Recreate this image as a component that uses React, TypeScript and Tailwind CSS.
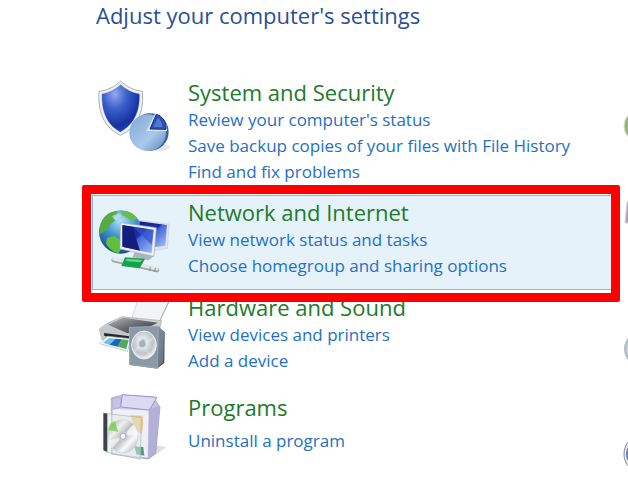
import type { ReactNode } from "react";
import clsx from "clsx";

type Category = {
  title: string;
  links: string[];
  icon: ReactNode;
  className?: string;
  linksClassName?: string;
  selected?: boolean;
};

const iconClass = "h-20 w-[72px] shrink-0";

function SecurityIcon() {
  return (
    <svg className={iconClass} viewBox="24 27 216 240" aria-hidden="true">
      <defs>
        <radialGradient id="shield" cx="0.35" cy="0.2" r="0.9">
          <stop offset="0" stopColor="#8fabef" />
          <stop offset="0.35" stopColor="#3c5fca" />
          <stop offset="0.75" stopColor="#1530a0" />
          <stop offset="1" stopColor="#2c55cf" />
        </radialGradient>
        <linearGradient id="pie" x1="0" y1="0" x2="1" y2="1">
          <stop offset="0" stopColor="#7fa6d6" />
          <stop offset="0.6" stopColor="#a9c9ec" />
          <stop offset="1" stopColor="#5b84bd" />
        </linearGradient>
      </defs>
      <ellipse cx="196" cy="232" rx="44" ry="12" fill="#e3e6ea" />
      <path d="M92 33C75 50 53 61 27 64C24 115 34 168 91 196C148 170 162 118 157 64C130 61 109 49 92 33Z" fill="#eef1f4" stroke="#a7afb8" strokeWidth="3" />
      <path d="M92 44C76 58 57 68 36 72C35 116 45 161 91 186C137 161 150 116 148 72C127 68 107 58 92 44Z" fill="url(#shield)" stroke="#54709f" strokeWidth="1" />
      <circle cx="180" cy="186" r="56" fill="#3a5fa6" />
      <circle cx="173" cy="188" r="55" fill="url(#pie)" />
      <path d="M169 183L195 131C222 137 233 158 231 183Z" fill="#d7e6f7" />
      <path d="M180 177L199 133C220 140 230 158 228 178Z" fill="#2a51b8" stroke="#17327c" strokeWidth="3" />
      <path d="M190 171L203 143C212 149 216 159 217 171Z" fill="#4f7ad2" />
    </svg>
  );
}

function NetworkIcon() {
  return (
    <svg className={iconClass} viewBox="54 57 216 240" aria-hidden="true">
      <defs>
        <radialGradient id="globe" cx="0.5" cy="0.25" r="0.8">
          <stop offset="0" stopColor="#b4e4fa" />
          <stop offset="0.45" stopColor="#3f92d2" />
          <stop offset="1" stopColor="#12427f" />
        </radialGradient>
        <linearGradient id="screen" x1="0" y1="0" x2="1" y2="1">
          <stop offset="0" stopColor="#10208a" />
          <stop offset="0.45" stopColor="#1b2da6" />
          <stop offset="0.5" stopColor="#4666d8" />
          <stop offset="1" stopColor="#a8c4f4" />
        </linearGradient>
      </defs>
      <circle cx="122" cy="156" r="65" fill="url(#globe)" />
      <path d="M61 136C68 110 84 97 108 93L114 103L101 111L105 122L91 132L80 151L66 158L58 166Z" fill="#57ac40" />
      <path d="M122 92C145 91 162 100 173 116L154 122L139 111L127 106Z" fill="#67bd4b" />
      <path d="M81 174L103 168L121 180L126 205L115 220C99 217 85 205 78 190Z" fill="#60c03c" />
      <path d="M94 109L115 99L124 108L108 122Z" fill="#c2edf4" opacity="0.6" />
      <path d="M177 121L268 132L262 205L229 211L180 197Z" fill="#dfe5ee" stroke="#a9b4c2" strokeWidth="1" />
      <path d="M178 124L261 135L256 197L228 201L179 190Z" fill="url(#screen)" />
      <path d="M164 216L222 228L205 241L158 232Z" fill="#aab5bd" />
      <path d="M121 128L229 143L222 229L120 207Z" fill="#edf0f5" stroke="#a2adbb" strokeWidth="2" />
      <path d="M127 135L221 149L215 220L127 200Z" fill="url(#screen)" />
      <path d="M128 136L157 141L180 212L128 200Z" fill="#121e7c" />
      <path d="M160 142L220 151L215 194Z" fill="#3552cc" opacity="0.7" />
      <path d="M101 240L231 270" stroke="#9ba6a5" strokeWidth="14" strokeLinecap="round" />
      <path d="M101 237L231 267" stroke="#e3ebe8" strokeWidth="9" strokeLinecap="round" />
      <path d="M135 232L195 236L179 265L124 258Z" fill="#14a04c" />
      <path d="M141 236L187 240L180 247L137 243Z" fill="#6cd585" />
      <path d="M211 260L209 272M226 264L224 276" stroke="#7d8a88" strokeWidth="3" />
    </svg>
  );
}

function HardwareIcon() {
  return (
    <svg className={iconClass} viewBox="24 12 216 240" aria-hidden="true">
      <defs>
        <linearGradient id="printer" x1="0" y1="0" x2="1" y2="1">
          <stop offset="0" stopColor="#b5b8bb" />
          <stop offset="0.5" stopColor="#666a6e" />
          <stop offset="1" stopColor="#34383c" />
        </linearGradient>
        <linearGradient id="speaker" x1="0" y1="0" x2="1" y2="1">
          <stop offset="0" stopColor="#929eaa" />
          <stop offset="1" stopColor="#667581" />
        </linearGradient>
        <radialGradient id="cone" cx="0.45" cy="0.4" r="0.6">
          <stop offset="0" stopColor="#8d979f" />
          <stop offset="0.25" stopColor="#e3e8eb" />
          <stop offset="0.7" stopColor="#bcc5cb" />
          <stop offset="1" stopColor="#f3f5f6" />
        </radialGradient>
      </defs>
      <path d="M145 24L238 34L204 104L126 83Z" fill="#f3f4f5" stroke="#c9cdd1" strokeWidth="2" />
      <path d="M236 36L204 104" stroke="#a3a8ad" strokeWidth="3" />
      <path d="M28 117L50 101L96 80L215 92L207 124L120 160L36 149Z" fill="#c9cdcf" stroke="#a5abb0" strokeWidth="2" />
      <path d="M54 104L99 83L203 98L171 115L112 130Z" fill="url(#printer)" />
      <path d="M30 119L54 108L111 133L119 153L104 158L34 146Z" fill="#c3c7c8" />
      <path d="M42 129L119 139L118 149L43 138Z" fill="#25292d" />
      <path d="M53 139L121 146L113 184L28 161Z" fill="#fbfcfd" stroke="#a9b5bd" strokeWidth="2" />
      <path d="M58 144L77 146L58 164L39 158Z" fill="#75bde5" />
      <path d="M77 146L96 148L83 170L58 164Z" fill="#1769b5" />
      <path d="M96 148L116 150L109 177L83 170Z" fill="#55a95a" />
      <path d="M205 115L224 125L223 219L202 235Z" fill="#43505a" />
      <path d="M117 112L205 108L222 125L219 215L202 236L118 225Z" fill="url(#speaker)" />
      <path d="M118 112L205 109L202 234L119 224Z" fill="#8999a5" stroke="#a7b3bb" strokeWidth="2" />
      <ellipse cx="162" cy="165" rx="37" ry="42" fill="url(#cone)" stroke="#e9edef" strokeWidth="3" />
      <path d="M158 161L139 132M159 162L190 145M159 164L180 196M157 163L134 184" stroke="#f9fbfc" strokeWidth="4" opacity="0.4" />
      <circle cx="157" cy="162" r="10" fill="#a8b2b9" />
    </svg>
  );
}

function ProgramsIcon() {
  return (
    <svg className={iconClass} viewBox="24 27 216 240" aria-hidden="true">
      <defs>
        <linearGradient id="box" x1="0" y1="0" x2="1" y2="1">
          <stop offset="0" stopColor="#e6e5f8" />
          <stop offset="1" stopColor="#a6a3cd" />
        </linearGradient>
        <linearGradient id="disc" x1="0" y1="0" x2="1" y2="1">
          <stop offset="0" stopColor="#9ba1a6" />
          <stop offset="0.3" stopColor="#f0f1ef" />
          <stop offset="0.5" stopColor="#b4babe" />
          <stop offset="0.7" stopColor="#fafafa" />
          <stop offset="1" stopColor="#9aa2a7" />
        </linearGradient>
      </defs>
      <path d="M177 222L229 187L201 181Z" fill="#dedee3" />
      <path d="M64 39L96 30L190 36L210 67L197 205L175 222L65 207Z" fill="url(#box)" stroke="#9390bb" strokeWidth="2" />
      <path d="M177 73L210 62L195 205L174 221Z" fill="#b3b0d8" />
      <path d="M67 70L177 75L174 219L67 207Z" fill="#f0eff8" stroke="#bbb8d8" strokeWidth="2" />
      <path d="M92 66L97 29L201 37L178 75Z" fill="#dcdaf3" stroke="#9996c3" strokeWidth="3" />
      <path d="M66 40L93 36L91 67L69 73Z" fill="#c6c3e7" stroke="#a19fc7" strokeWidth="2" />
      <path d="M122 91L157 92L160 117L155 148L135 135Z" fill="#edc482" />
      <path d="M134 184L160 186L163 212L139 208Z" fill="#579c7f" />
      <path d="M45 85L154 98L151 223L44 200Z" fill="#dfe9e5" fillOpacity="0.5" stroke="#a5b8b1" strokeWidth="2" />
      <path d="M40 84L52 86L52 200L40 196Z" fill="#3c4249" />
      <ellipse cx="99" cy="154" rx="45" ry="50" fill="url(#disc)" stroke="#aab4b6" strokeWidth="1" />
      <path d="M85 141L54 135C57 119 65 111 75 109Z" fill="#7bcb4c" opacity="0.75" />
      <path d="M99 154L130 118C138 126 143 137 144 149Z" fill="#f9f9fa" opacity="0.8" />
      <path d="M99 154L67 190C60 183 56 176 55 167Z" fill="#f9f9fa" opacity="0.7" />
      <ellipse cx="99" cy="154" rx="14" ry="16" fill="#c5cbd1" />
      <ellipse cx="99" cy="154" rx="8" ry="9" fill="#fff" stroke="#8f979d" strokeWidth="2" />
    </svg>
  );
}

const categories: Category[] = [
  {
    title: "System and Security",
    links: [
      "Review your computer's status",
      "Save backup copies of your files with File History",
      "Find and fix problems",
    ],
    icon: <SecurityIcon />,
    className: "mb-1.5",
  },
  {
    title: "Network and Internet",
    links: ["View network status and tasks", "Choose homegroup and sharing options"],
    icon: <NetworkIcon />,
    selected: true,
  },
  {
    title: "Hardware and Sound",
    links: ["View devices and printers", "Add a device"],
    icon: <HardwareIcon />,
    className: "mb-3",
  },
  {
    title: "Programs",
    links: ["Uninstall a program"],
    icon: <ProgramsIcon />,
    linksClassName: "mt-2",
  },
];

// Left edges of the icons in the second column
function NextColumn() {
  return (
    <div className="flex w-2 shrink-0 flex-col overflow-hidden pt-[75px]" aria-hidden="true">
      <svg className="h-[120px] w-12" viewBox="0 0 48 120">
        <circle cx="20" cy="51" r="16" fill="#9db283" stroke="#d5decb" strokeWidth="1" />
      </svg>
      <svg className="h-[95px] w-12" viewBox="0 0 48 95">
        <path d="M7 7L40 2V28H5Z" fill="#aaa5bd" stroke="#d5d3df" strokeWidth="1" />
      </svg>
      <svg className="h-[100px] w-12" viewBox="0 0 48 100">
        <circle cx="21" cy="59" r="16" fill="#c6ced1" stroke="#b3bcc0" strokeWidth="2" />
      </svg>
      <svg className="h-[100px] w-12" viewBox="0 0 48 100">
        <ellipse cx="20" cy="64" rx="16" ry="18" fill="#e9ebee" stroke="#87888c" strokeWidth="1" />
        <circle cx="20" cy="64" r="14" fill="#6680bf" />
      </svg>
    </div>
  );
}

export default function App() {
  return (
    <div className="flex overflow-hidden bg-white font-['Open_Sans','Noto_Sans',sans-serif]">
      <main className="min-w-0 flex-1 pl-[92px]">
        <h1 className="mb-[45px] pl-1 text-[22px] leading-[30px] text-[#2a4f96]">Adjust your computer's settings</h1>
        <ul>
          {categories.map((category) => (
            <li
              key={category.title}
              className={clsx(
                "relative mr-1 flex gap-[18px] border py-[3px] pl-[5px]",
                category.selected ? "min-h-[95px] border-[#85bdd3] bg-[#e6f2fa]" : "border-transparent",
                category.className
              )}
            >
              {category.icon}
              <div>
                <h2 className="mb-0.5 text-[22px] leading-[26px]">
                  <a href="#" className="text-[#217a2b]">{category.title}</a>
                </h2>
                <ul className={category.linksClassName}>
                  {category.links.map((link) => (
                    <li key={link} className="text-[17px] leading-[26px]">
                      <a href="#" className="text-[#2470c2]">{link}</a>
                    </li>
                  ))}
                </ul>
              </div>
              {category.selected && (
                <div className="pointer-events-none absolute -top-[11px] -right-[5px] -bottom-[13px] -left-[11px] z-10 rounded-xs border-9 border-[#ff0000]" />
              )}
            </li>
          ))}
        </ul>
      </main>
      <NextColumn />
    </div>
  );
}
